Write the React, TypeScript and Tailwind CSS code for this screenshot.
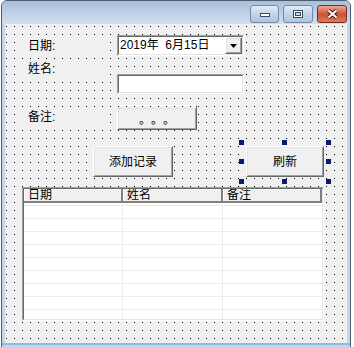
const sunkenOuter = "border border-t-[#a0a0a0] border-l-[#a0a0a0] border-r-white border-b-white";
const sunkenInner = "border border-t-[#696969] border-l-[#696969] border-r-[#e3e3e3] border-b-[#e3e3e3]";
const raisedOuter = "border border-t-white border-l-white border-r-[#696969] border-b-[#696969]";
const raisedInner = "border border-t-[#e3e3e3] border-l-[#e3e3e3] border-r-[#a0a0a0] border-b-[#a0a0a0]";

const FormLabel = ({ text, className }: { text: string; className: string }) => (
  <div className={`absolute w-[84px] h-[19px] bg-[#f0f0f0] pl-[6px] pt-[1px] leading-[16px] ${className}`}>{text}</div>
);

const Button = ({ text, className }: { text: string; className: string }) => (
  <div className={`absolute ${raisedOuter} ${className}`}>
    <div className={`w-full h-full ${raisedInner} bg-[#f0f0f0] flex items-center justify-center`}>{text}</div>
  </div>
);

const Handle = ({ className }: { className: string }) => (
  <div className={`absolute w-[5px] h-[5px] bg-[#0a1a70] ${className}`} />
);

const rows = [...Array(9)];

export default function App() {
  return (
    <div className="w-[354px] h-[347px] bg-white overflow-hidden text-[12px] text-black [text-spacing-trim:space-all] font-['Liberation_Sans','Noto_Sans_CJK_SC',sans-serif]">
      <div className="ml-px w-[350px] h-[350px] flex flex-col rounded-t-[6px] border border-[#4f5d70] bg-[#c3d5ea]">
        {/* Title bar */}
        <div className="h-[23px] shrink-0 rounded-t-[5px] bg-gradient-to-b from-[#a9c0da] to-[#d0dff0] flex items-start justify-end gap-[4px] pt-[4px] pr-[3px]">
          <div className="w-[29px] h-[18px] rounded-[3px] border border-[#7489a6] bg-gradient-to-b from-[#e2ebf6] via-[#c3d4e9] to-[#aec4df] flex items-center justify-center">
            <svg width="12" height="8" viewBox="0 0 12 8">
              <rect x="1.5" y="3.5" width="9" height="3" fill="#fff" stroke="#3a4a60" />
            </svg>
          </div>
          <div className="w-[30px] h-[18px] rounded-[3px] border border-[#7489a6] bg-gradient-to-b from-[#e2ebf6] via-[#c3d4e9] to-[#aec4df] flex items-center justify-center">
            <svg width="12" height="10" viewBox="0 0 12 10">
              <rect x="1.5" y="1.5" width="9" height="7" fill="#fff" stroke="#3a4a60" />
              <rect x="3.5" y="3.5" width="5" height="3" fill="#c9d7e8" stroke="#3a4a60" />
            </svg>
          </div>
          <div className="w-[30px] h-[18px] rounded-[3px] border border-[#7a2c20] bg-gradient-to-b from-[#e9ab98] via-[#cf5235] to-[#d97a5d] flex items-center justify-center">
            <svg width="13" height="10" viewBox="0 0 13 10">
              <path d="M2.5 1.5 L10.5 8.5 M10.5 1.5 L2.5 8.5" stroke="#4a1a12" strokeWidth="4" />
              <path d="M2.5 1.5 L10.5 8.5 M10.5 1.5 L2.5 8.5" stroke="#fff" strokeWidth="2" />
            </svg>
          </div>
        </div>

        {/* Client area with designer grid */}
        <div className="relative mx-[3px] h-[319px] shrink-0 bg-black bg-[linear-gradient(to_right,transparent_1px,#f0f0f0_1px),linear-gradient(to_bottom,transparent_1px,#f0f0f0_1px)] bg-[size:8px_8px] bg-[position:1px_2px]">
          <FormLabel text="日期:" className="left-[17px] top-[13px]" />
          <FormLabel text="姓名:" className="left-[17px] top-[36px]" />
          <FormLabel text="备注:" className="left-[17px] top-[84px]" />

          {/* Date picker */}
          <div className={`absolute left-[112px] top-[11px] w-[127px] h-[21px] ${sunkenOuter}`}>
            <div className={`w-full h-full ${sunkenInner} bg-white flex items-center`}>
              <span className="flex-1 pl-[1px] leading-[15px] whitespace-pre">2019年  6月15日</span>
              <div className={`w-[17px] h-full ${raisedOuter}`}>
                <div className={`w-full h-full ${raisedInner} bg-[#f0f0f0] flex items-center justify-center`}>
                  <svg width="7" height="4" viewBox="0 0 7 4">
                    <polygon points="0,0 7,0 3.5,4" fill="#000" />
                  </svg>
                </div>
              </div>
            </div>
          </div>

          {/* Text box */}
          <div className={`absolute left-[112px] top-[50px] w-[127px] h-[20px] ${sunkenOuter}`}>
            <div className={`w-full h-full ${sunkenInner} bg-white`} />
          </div>

          <Button text="。。。" className="left-[112px] top-[81px] w-[80px] h-[25px] font-['Noto_Sans_CJK_SC'] pt-[2px]" />
          <Button text="添加记录" className="left-[88px] top-[122px] w-[80px] h-[31px]" />
          <Button text="刷新" className="left-[241px] top-[122px] w-[78px] h-[31px]" />

          {/* Selection handles */}
          <Handle className="left-[234px] top-[116px]" />
          <Handle className="left-[277px] top-[116px]" />
          <Handle className="left-[321px] top-[116px]" />
          <Handle className="left-[234px] top-[135px]" />
          <Handle className="left-[321px] top-[135px]" />
          <Handle className="left-[234px] top-[155px]" />
          <Handle className="left-[277px] top-[155px]" />
          <Handle className="left-[321px] top-[155px]" />

          {/* List view */}
          <div className={`absolute left-[17px] top-[163px] w-[302px] h-[134px] ${sunkenOuter}`}>
            <div className={`w-full h-full ${sunkenInner} bg-white flex flex-col overflow-hidden`}>
              <div className="h-[14px] shrink-0 flex">
                {["日期", "姓名", "备注"].map((h, i) => (
                  <div
                    key={h}
                    className={`${i === 1 ? "w-[100px]" : "w-[99px]"} h-full bg-[#f0f0f0] border-r-2 border-b-2 border-[#808080] shadow-[inset_1px_1px_0_#fff] pl-[4px] leading-[13px]`}
                  >
                    {h}
                  </div>
                ))}
              </div>
              <div className="pt-[2px]">
                {rows.map((_, i) => (
                  <div key={i} className="h-[13px] flex border-t border-[#ececec]">
                    <div className="w-[99px] border-r border-[#ececec]" />
                    <div className="w-[100px] border-r border-[#ececec]" />
                    <div className="flex-1" />
                  </div>
                ))}
              </div>
            </div>
          </div>
        </div>
        <div className="h-[2px] bg-[#8fbbe6]" />
      </div>
    </div>
  );
}
